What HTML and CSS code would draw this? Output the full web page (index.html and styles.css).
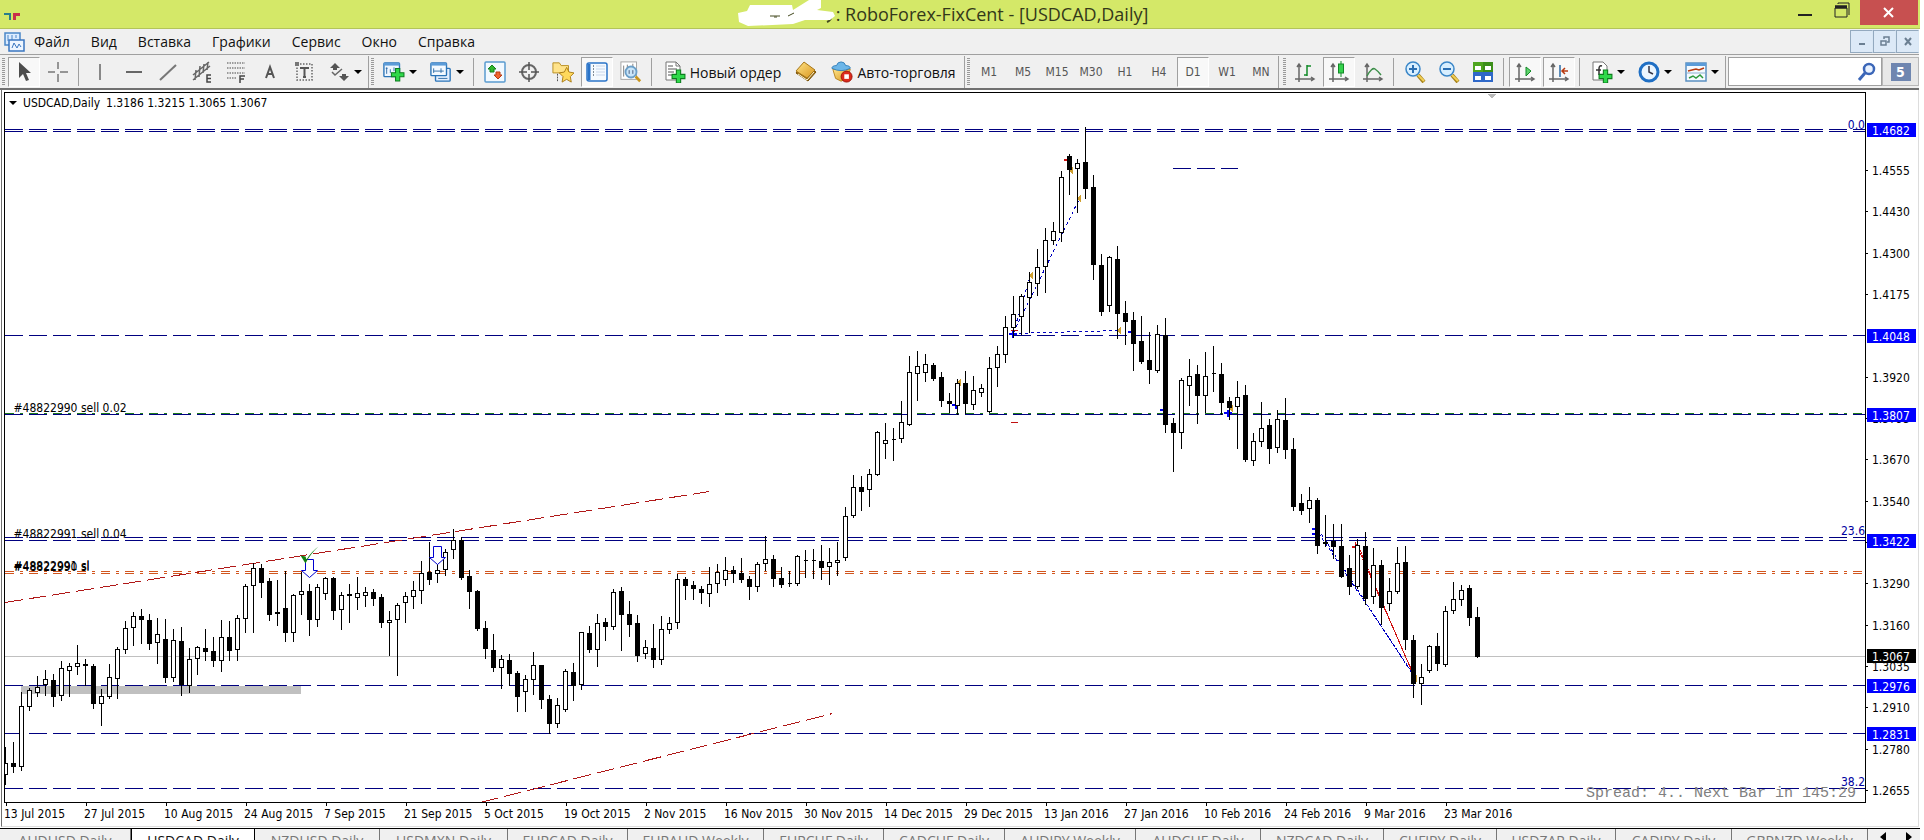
FILE: index.html
```html
<!DOCTYPE html>
<html lang="ru">
<head>
<meta charset="utf-8">
<title>RoboForex-FixCent - [USDCAD,Daily]</title>
<link rel="stylesheet" href="styles.css">
</head>
<body>
<svg class="sprite" aria-hidden="true">
  <defs>
    <linearGradient id="gold" x1="0" y1="0" x2="1" y2="1"><stop offset="0" stop-color="#ffe58a"/><stop offset="1" stop-color="#d9951c"/></linearGradient>
    <symbol id="plus" viewBox="0 0 14 14"><path d="M5 1h4v4h4v4H9v4H5V9H1V5h4z" fill="#2fd84a" stroke="#0c7d1e"/></symbol>
    <symbol id="cursor" viewBox="0 0 22 22"><path d="M6 1v16l4-4 3 7 3-1-3-7h5z" fill="#4d4d4d"/></symbol>
    <symbol id="cross" viewBox="0 0 22 22"><path d="M11 1v7M11 13v8M1 11h7M13 11h8" stroke="#777" stroke-width="1.500" fill="none"/></symbol>
    <symbol id="vline" viewBox="0 0 22 22"><path d="M11 3v16" stroke="#666" stroke-width="1.500"/></symbol>
    <symbol id="hline" viewBox="0 0 22 22"><path d="M3 11h16" stroke="#666" stroke-width="2"/></symbol>
    <symbol id="trend" viewBox="0 0 22 22"><path d="M3 19L19 4" stroke="#777" stroke-width="2"/></symbol>
    <symbol id="channel" viewBox="0 0 22 22"><path d="M2 14L18 1M2 19L19 5M5 9l-1 10M9 5L8 16M13 3l-1 9M17 1l-1 8" stroke="#666" stroke-width="1.500" fill="none"/><path d="M20 14h-4v7h4M16 17.500h4" stroke="#444" stroke-width="1.500" fill="none"/></symbol>
    <symbol id="fibo" viewBox="0 0 22 22"><path d="M2 2h18M2 7h18M2 12h18M2 17h10" stroke="#808080" stroke-width="1.500" stroke-dasharray="1.500 1"/><path d="M20 15h-5v7M15 18h4" stroke="#444" stroke-width="1.500" fill="none"/></symbol>
    <symbol id="lettera" viewBox="0 0 22 22"><path d="M7 17l4-11 4 11M8 13h6" stroke="#555" stroke-width="2" fill="none"/></symbol>
    <symbol id="textbox" viewBox="0 0 22 22"><rect x="4" y="3" width="15" height="16" fill="none" stroke="#666" stroke-width="1.500" stroke-dasharray="1.500 1.500"/><path d="M8 8V7h7v1M11.500 7v9M10 16h3" stroke="#555" stroke-width="2" fill="none"/><path d="M2 1h4v4H2z" fill="#777"/></symbol>
    <symbol id="arrows" viewBox="0 0 22 22"><path d="M7 2l5 5H9v2H5V7H2z" fill="#555"/><path d="M16 20l-5-5h3v-2h4v2h3z" fill="#555"/><path d="M4 11l3 3 7-6" stroke="#666" stroke-width="1.500" fill="none"/></symbol>
    <symbol id="newchart" viewBox="0 0 24 24"><rect x="1" y="2" width="17" height="15" rx="1" fill="#eef6ff" stroke="#2b74b8" stroke-width="1.500"/><path d="M1 2h17v3H1z" fill="#5b9bd8"/><path d="M4 7v7M3 8h2M8 9v4M12 7v4" stroke="#2b6aa5"/><use href="#plus" x="8" y="7" width="16" height="16"/></symbol>
    <symbol id="profiles" viewBox="0 0 24 24"><rect x="6" y="8" width="16" height="14" rx="1" fill="#e3efff" stroke="#2b74b8" stroke-width="1.500"/><path d="M9 19h10" stroke="#2b6aa5"/><rect x="1" y="2" width="17" height="14" rx="1" fill="#f3f9ff" stroke="#2b74b8" stroke-width="1.500"/><path d="M1 2h17v3H1z" fill="#5b9bd8"/><path d="M4 8v5M4 11h11M12 8v5" stroke="#2b6aa5"/></symbol>
    <symbol id="market" viewBox="0 0 22 22"><rect x="1" y="1" width="20" height="20" rx="1" fill="#f2f9ff" stroke="#5a9bcf" stroke-width="1.500"/><path d="M8 4l4 4h-2v3H6V8H4z" fill="#2fb82f" stroke="#14801c"/><path d="M14 18l-4-4h2v-3h4v3h2z" fill="#f0652f" stroke="#b83a10"/></symbol>
    <symbol id="target" viewBox="0 0 22 22"><circle cx="11" cy="11" r="7" fill="none" stroke="#666" stroke-width="2"/><path d="M11 1v8M11 13v8M1 11h8M13 11h8" stroke="#555" stroke-width="1.500"/></symbol>
    <symbol id="favorites" viewBox="0 0 24 24"><path d="M1 2h7l2 3h8v8H1z" fill="#ffe38a" stroke="#b58a1e"/><path d="M6 14v8" stroke="#444" stroke-dasharray="2 1"/><path d="M16 7l2.500 5 5.500 1-4 4 1 6-5-3-5 3 1-6-4-4 5.500-1z" fill="#ffd95c" stroke="#a97a12"/></symbol>
    <symbol id="navigator" viewBox="0 0 22 22"><rect x="1" y="2" width="20" height="18" rx="2" fill="#f5faff" stroke="#2b74c8" stroke-width="1.500"/><path d="M3 3v16" stroke="#2b74c8" stroke-width="3"/><path d="M7 5h1M7 8h1M7 11h1M7 14h1" stroke="#123"/><path d="M10 5h9M10 8h9M10 11h9M10 14h9" stroke="#c9d6ea"/></symbol>
    <symbol id="tester" viewBox="0 0 24 24"><rect x="1" y="1" width="17" height="19" fill="#fff" stroke="#a0a0a0"/><path d="M4 5v12M8 4v6M14 3v4" stroke="#777"/><circle cx="12" cy="12" r="6" fill="#bfe0f8" fill-opacity=".85" stroke="#6b9fc8" stroke-width="2"/><path d="M10 10v4M14 10v4" stroke="#457"/><path d="M17 17l5 5" stroke="#c9951c" stroke-width="3"/></symbol>
    <symbol id="order" viewBox="0 0 22 22"><path d="M2 1h10l4 4v14H2z" fill="#fff" stroke="#777"/><path d="M12 1v4h4" fill="none" stroke="#777"/><path d="M4 5h5M4 8h9M4 11h6M4 14h4" stroke="#555"/><use href="#plus" x="7" y="8" width="15" height="15"/></symbol>
    <symbol id="book" viewBox="0 0 22 22"><path d="M9 2l12 9-8 9L1 12z" fill="#9a6a10" stroke="#7a5208"/><path d="M9 1l11 8-8 8L1 10z" fill="url(#gold)" stroke="#a8781a"/><path d="M3 13l9 6 7-8" stroke="#fff5cf" fill="none"/></symbol>
    <symbol id="auto" viewBox="0 0 24 24"><path d="M2 9h19l-3 10-7 3-6-3z" fill="url(#gold)" stroke="#b8821a"/><path d="M1 8q0-3 5-3 1-4 5-4t5 4q5 0 5 3-10 5-20 0z" fill="#6cb6e8" stroke="#2f7db8"/><circle cx="17" cy="17" r="6" fill="#dc2b1c" stroke="#9d1208"/><rect x="14.500" y="14.500" width="5" height="5" fill="#fff"/></symbol>
    <symbol id="axes" viewBox="0 0 22 22"><path d="M5 21V3M1 18h19M3 6l2-3 2 3M17 16l3 2-3 2" stroke="#666" stroke-width="1.500" fill="none"/></symbol>
    <symbol id="bars" viewBox="0 0 22 22"><use href="#axes"/><path d="M13 4v11M13 5h4M10 14h3" stroke="#128a28" stroke-width="1.500"/></symbol>
    <symbol id="candles" viewBox="0 0 22 22"><use href="#axes"/><path d="M13 0v16" stroke="#128a28"/><rect x="10.500" y="3" width="5" height="9" fill="#35d24c" stroke="#128a28"/></symbol>
    <symbol id="linechart" viewBox="0 0 22 22"><use href="#axes"/><path d="M5 15q5-9 8-7t6 6" stroke="#3d8f4a" stroke-width="1.500" fill="none"/></symbol>
    <symbol id="zoomin" viewBox="0 0 22 22"><path d="M14 14l6 7" stroke="#a8841c" stroke-width="4"/><path d="M14 14l6 6" stroke="#f2cf55" stroke-width="2"/><circle cx="9" cy="8" r="7" fill="#d8efff" stroke="#3a86c8" stroke-width="1.500"/><path d="M5 8h8M9 4v8" stroke="#2b6fb3" stroke-width="2"/></symbol>
    <symbol id="zoomout" viewBox="0 0 22 22"><path d="M14 14l6 7" stroke="#a8841c" stroke-width="4"/><path d="M14 14l6 6" stroke="#f2cf55" stroke-width="2"/><circle cx="9" cy="8" r="7" fill="#d8efff" stroke="#3a86c8" stroke-width="1.500"/><path d="M5 8h8" stroke="#2b6fb3" stroke-width="2"/></symbol>
    <symbol id="tile" viewBox="0 0 22 22"><path d="M1 1h10v10H1zM11 11h10v10H11z" fill="#4fa51f"/><path d="M11 1h10v10H11z" fill="#3c8f1a"/><path d="M1 11h10v10H1z" fill="#2f68c8"/><path d="M11 11h10v10H11z" fill="#2f68c8"/><path d="M3 5h6v4H3zM13 5h6v4h-6zM3 15h6v4H3zM13 15h6v4h-6z" fill="#fff"/></symbol>
    <symbol id="autoscroll" viewBox="0 0 22 22"><use href="#axes"/><path d="M12 6l5 4-5 5z" fill="#5fd36c" stroke="#128a28"/></symbol>
    <symbol id="shift" viewBox="0 0 22 22"><use href="#axes"/><path d="M12 4v12" stroke="#2b6aa5" stroke-width="1.500"/><path d="M14 10h6M17 7l-3 3 3 3" stroke="#b83a10" stroke-width="1.500" fill="none"/></symbol>
    <symbol id="indicators" viewBox="0 0 22 22"><path d="M2 1h10l4 4v14H2z" fill="#fff" stroke="#777"/><path d="M11 5q-3-1-3 3v6M5 9h5" stroke="#333" stroke-width="1.500" fill="none"/><use href="#plus" x="7" y="8" width="15" height="15"/></symbol>
    <symbol id="clock" viewBox="0 0 22 22"><circle cx="11" cy="11" r="9" fill="#eaf5ff" stroke="#1f6fc4" stroke-width="3"/><path d="M11 5v6l4 2" stroke="#334" stroke-width="1.500" fill="none"/></symbol>
    <symbol id="template" viewBox="0 0 22 22"><rect x="1" y="2" width="20" height="18" fill="#f5faff" stroke="#5a8fc0" stroke-width="1.500"/><path d="M1 2h20v3H1z" fill="#5b9bd8"/><path d="M3 10l4-1 4-1 3 1 5-2" stroke="#b83a10" stroke-width="1.500" fill="none"/><path d="M1 12h20" stroke="#8fb2d0"/><path d="M4 17l4-2 3 2 4-3 3 3" stroke="#2f9a3c" stroke-width="1.500" fill="none"/></symbol>
    <symbol id="search" viewBox="0 0 20 20"><circle cx="12" cy="7" r="5" fill="#e9f2ff" stroke="#3b66b8" stroke-width="2.500"/><path d="M8 11l-6 7" stroke="#3b66b8" stroke-width="3"/></symbol>
  </defs>
</svg>

<div class="window">
  <header class="titlebar">
    <svg class="app-logo" width="18" height="10" aria-hidden="true"><path d="M0 1h7v7H5V3H0z" fill="#2a7f8c"/><path d="M9 1h7v3h-4v4H9z" fill="#c8304a"/></svg>
    <h1 class="title">
      <svg class="redaction" width="98" height="28" aria-hidden="true"><path d="M90 14q6 5-1 8" fill="none" stroke="#444a20" stroke-width="2"/><path d="M0 13l9-2 3-6h42l1 5 8-5 8-5h12v8l-4 2 16 2 2 4-5 4H67l-12 4-45 2-9-4z" fill="#fff"/><path d="M32 16h10M36 17h3M50 16l6-3" stroke="#444a20"/></svg>
      <span>: RoboForex-FixCent - [USDCAD,Daily]</span>
    </h1>
    <div class="window-buttons">
      <button class="win-btn" aria-label="Свернуть"><svg width="16" height="20"><path d="M1 15h14" stroke="#222" stroke-width="2"/></svg></button>
      <button class="win-btn" aria-label="Развернуть"><svg width="16" height="20"><path d="M1 8h12v9H1zM1 6h12M4 4V3h11v12" fill="none" stroke="#222" stroke-width="1"/><path d="M1 7h12" stroke="#222" stroke-width="3"/></svg></button>
      <button class="win-btn close" aria-label="Закрыть"><svg width="12" height="12"><path d="M1 1l9 9M10 1l-9 9" stroke="#fff" stroke-width="2"/></svg></button>
    </div>
  </header>

  <nav class="menubar">
    <svg class="menu-icon" width="22" height="22" aria-hidden="true"><rect x="1" y="2" width="15" height="12" fill="#dcecff" stroke="#4a86c8" stroke-width="1.500"/><path d="M4 4v6M8 4v5M12 4v3" stroke="#4a86c8"/><rect x="5" y="9" width="15" height="11" fill="#eef6ff" stroke="#3a76c0" stroke-width="1.500"/><path d="M8 17l2-5 3 5 2-4 2 3" stroke="#3a76c0" fill="none"/></svg>
    <button class="menu">Файл</button><button class="menu">Вид</button><button class="menu">Вставка</button><button class="menu">Графики</button><button class="menu">Сервис</button><button class="menu">Окно</button><button class="menu">Справка</button>
    <div class="mdi-buttons">
      <button class="mdi" aria-label="Свернуть график"><svg width="12" height="12"><path d="M3 9h6" stroke="#6b7f92" stroke-width="2"/></svg></button>
      <button class="mdi" aria-label="Восстановить график"><svg width="12" height="12"><path d="M2 6h5v4H2zM5 4V2h5v5H8" fill="none" stroke="#6b7f92" stroke-width="1.500"/></svg></button>
      <button class="mdi" aria-label="Закрыть график"><svg width="12" height="12"><path d="M3 3l6 7M9 3l-6 7" stroke="#6b7f92" stroke-width="2"/></svg></button>
    </div>
  </nav>

  <div class="toolbar">
    <div class="group">
      <i class="grip"></i>
      <button class="tool pressed" aria-label="Курсор"><svg><use href="#cursor"/></svg></button>
      <button class="tool" aria-label="Перекрестие"><svg><use href="#cross"/></svg></button>
      <i class="sep"></i>
      <button class="tool" aria-label="Вертикальная линия"><svg><use href="#vline"/></svg></button>
      <button class="tool" aria-label="Горизонтальная линия"><svg><use href="#hline"/></svg></button>
      <button class="tool" aria-label="Трендовая линия"><svg><use href="#trend"/></svg></button>
      <button class="tool" aria-label="Канал"><svg><use href="#channel"/></svg></button>
      <button class="tool" aria-label="Фибоначчи"><svg><use href="#fibo"/></svg></button>
      <button class="tool" aria-label="Текст"><svg><use href="#lettera"/></svg></button>
      <button class="tool" aria-label="Метка"><svg><use href="#textbox"/></svg></button>
      <button class="tool drop" aria-label="Стрелки"><svg><use href="#arrows"/></svg></button>
    </div>
    <div class="group">
      <i class="grip"></i>
      <button class="tool drop" aria-label="Новый график"><svg><use href="#newchart"/></svg></button>
      <button class="tool drop" aria-label="Профили"><svg><use href="#profiles"/></svg></button>
      <i class="sep"></i>
      <button class="tool" aria-label="Обзор рынка"><svg><use href="#market"/></svg></button>
      <button class="tool" aria-label="Окно данных"><svg><use href="#target"/></svg></button>
      <button class="tool" aria-label="Избранное"><svg><use href="#favorites"/></svg></button>
      <button class="tool pressed" aria-label="Навигатор"><svg><use href="#navigator"/></svg></button>
      <button class="tool" aria-label="Тестер стратегий"><svg><use href="#tester"/></svg></button>
      <i class="sep"></i>
      <button class="tool wide order"><svg><use href="#order"/></svg>Новый ордер</button>
      <button class="tool" aria-label="Редактор"><svg><use href="#book"/></svg></button>
      <button class="tool wide auto"><svg><use href="#auto"/></svg>Авто-торговля</button>
    </div>
    <div class="group">
      <i class="grip"></i>
      <button class="tool period">M1</button><button class="tool period">M5</button><button class="tool period">M15</button><button class="tool period">M30</button><button class="tool period">H1</button><button class="tool period">H4</button><button class="tool period pressed">D1</button><button class="tool period">W1</button><button class="tool period">MN</button>
    </div>
    <div class="group charts">
      <i class="grip"></i>
      <button class="tool" aria-label="Бары"><svg><use href="#bars"/></svg></button>
      <button class="tool pressed" aria-label="Свечи"><svg><use href="#candles"/></svg></button>
      <button class="tool" aria-label="Линия"><svg><use href="#linechart"/></svg></button>
      <i class="sep"></i>
      <button class="tool" aria-label="Увеличить"><svg><use href="#zoomin"/></svg></button>
      <button class="tool" aria-label="Уменьшить"><svg><use href="#zoomout"/></svg></button>
      <button class="tool" aria-label="Окна мозаикой"><svg><use href="#tile"/></svg></button>
      <i class="sep"></i>
      <button class="tool pressed" aria-label="Автопрокрутка"><svg><use href="#autoscroll"/></svg></button>
      <button class="tool pressed" aria-label="Сдвиг графика"><svg><use href="#shift"/></svg></button>
      <i class="sep"></i>
      <button class="tool drop" aria-label="Индикаторы"><svg><use href="#indicators"/></svg></button>
      <button class="tool drop" aria-label="Периоды"><svg><use href="#clock"/></svg></button>
      <button class="tool drop" aria-label="Шаблоны"><svg><use href="#template"/></svg></button>
    </div>
    <div class="search">
      <input type="text" aria-label="Поиск">
      <svg class="lens" width="20" height="20" aria-hidden="true"><use href="#search"/></svg>
    </div>
    <button class="chat"><span>5</span></button>
  </div>

  <main class="chart">
    <div class="plot">
      <svg class="canvas" id="plot"></svg>
      <p class="quote"><i class="caret"></i><span>USDCAD,Daily</span><span>1.3186 1.3215 1.3065 1.3067</span></p>
      <p class="spread">Spread: 4.. Next Bar in 145:29</p>
    </div>
    <svg class="prices" id="prices"></svg>
    <div class="dates" id="dates"></div>
  </main>

  <nav class="tabs">
    <button>AUDUSD,Daily</button><button class="active">USDCAD,Daily</button><button>NZDUSD,Daily</button><button>USDMXN,Daily</button><button>EURCAD,Daily</button><button>EURAUD,Weekly</button><button>EURCHF,Daily</button><button>CADCHF,Daily</button><button>AUDJPY,Weekly</button><button>AUDCHF,Daily</button><button>NZDCAD,Daily</button><button>CHFJPY,Daily</button><button>USDZAR,Daily</button><button>CADJPY,Daily</button><button>GBPNZD,Weekly</button>
    <div class="tab-arrows"><svg width="36" height="16" aria-hidden="true"><path d="M8 3v10L2 8zM28 3v10l6-5z" fill="#000"/></svg></div>
  </nav>
</div>
<script src="chart.js"></script>
</body>
</html>
```
FILE: styles.css
```css
* { box-sizing: border-box; }
body {
  margin: 0;
  height: 100vh;
  overflow: hidden;
  background: #fff;
  font-family: "Open Sans", "Noto Sans", sans-serif;
  color: #111;
}
button { margin: 0; padding: 0; border: 0; background: none; font: inherit; color: inherit; white-space: nowrap; }
p, h1 { margin: 0; font-weight: 400; }
.sprite { position: absolute; width: 0; height: 0; }
.window { display: flex; flex-direction: column; height: 100vh; }

.titlebar {
  display: flex;
  flex: 0 0 29px;
  min-height: 0;
  margin-right: 4px;
  padding-left: 4px;
  background: #d4e868;
  border-bottom: 1px solid #b3c45a;
}
.app-logo { margin-top: 12px; }
.title {
  display: flex;
  flex: 1;
  justify-content: center;
  padding-left: 78px;
  font-size: 18px;
  line-height: 28px;
  color: #33381a;
  white-space: nowrap;
}
.title span { padding-top: 1px; line-height: 27px; }
.redaction { flex: none; }
.window-buttons { display: flex; align-items: flex-start; }
.win-btn { width: 37px; height: 25px; }
.win-btn.close { width: 58px; margin-right: 2px; background: #c75050; }

.menubar {
  display: flex;
  align-items: center;
  flex: 0 0 26px;
  min-height: 0;
  margin-right: 5px;
  padding-left: 4px;
  background: #f0f0f0;
  border-bottom: 1px solid #a0a0a0;
  font-size: 14px;
}
.menu-icon { margin-right: 8px; }
.menu { margin-right: 21px; }
.mdi-buttons { display: flex; margin-left: auto; }
.mdi { width: 23px; height: 23px; border: 1px solid #93a9bf; border-right-color: #d8e6f4; background: #dce9f7; }

.toolbar {
  display: flex;
  align-items: stretch;
  flex: 0 0 35px;
  min-height: 0;
  margin-right: 5px;
  padding-top: 1px;
  background: #f0f0f0;
  border-bottom: 2px solid #707070;
}
.group { display: flex; flex: none; align-items: center; padding-left: 2px; border-right: 1px solid #a0a0a0; }
.group.charts { padding-left: 4px; }
.grip { width: 3px; height: 28px; margin-right: 2px; background: repeating-linear-gradient(#999 0 1px, #f0f0f0 1px 2px); }
.sep { width: 1px; height: 28px; margin: 0 4px 0 3px; background: #a0a0a0; }
.tool { display: flex; align-items: center; justify-content: center; width: 34px; height: 30px; }
.tool svg { flex: none; width: 22px; height: 22px; }
.tool.pressed {
  width: 32px;
  margin: 0 1px;
  border: 1px solid #a0a0a0;
  border-right-color: #fff;
  border-bottom-color: #fff;
  background: #f8f8f8;
}
.tool.drop { width: 47px; gap: 4px; }
.tool.drop::after, .caret { content: ""; border: 4px solid transparent; border-top: 4px solid #000; border-bottom: 0; }
.tool.wide { gap: 4px; font-size: 14px; }
.tool.order { width: 133px; }
.tool.auto { width: 141px; }
.tool.period { font: 12px "DejaVu Sans Condensed", sans-serif; color: #555; }
.search {
  display: flex;
  flex: 1;
  align-items: center;
  min-width: 0;
  margin: 1px 0 2px 2px;
  padding-right: 4px;
  border: 1px solid #a0a0a0;
  background: #fff;
}
.search input { flex: 1; width: 0; min-width: 0; height: 26px; padding: 0 4px; border: 0; outline: 0; }
.lens { flex: none; }
.chat { flex: none; width: 37px; margin: 1px 0 2px; border: 1px solid #b8b8b8; background: #e8e8e8; }
.chat span {
  display: block;
  width: 20px;
  margin: 0 auto;
  background: #6f86b0;
  color: #fff;
  font: bold 14px/18px "DejaVu Sans Condensed", sans-serif;
}

.chart {
  display: grid;
  flex: 1;
  grid-template: minmax(0, 1fr) 23px / minmax(0, 1fr) 52px;
  margin: 0 5px 0 1px;
  padding: 2px 0 0 2px;
  border-left: 1px solid #707070;
  border-right: 1px solid #ddd;
  border-bottom: 1px solid #ddd;
  font: 12px "DejaVu Sans Condensed", sans-serif;
  color: #000;
}
.plot { position: relative; border: 1px solid #000; }
.canvas, .prices { display: block; width: 100%; height: 100%; overflow: hidden; }
.quote { position: absolute; top: 3px; left: 4px; display: flex; align-items: center; line-height: 14px; }
.quote span { margin-left: 6px; }
.spread { position: absolute; right: 9px; bottom: 0; color: #808080; font: 15px "Liberation Mono", monospace; }
.dates { display: flex; grid-column: 1 / -1; }
.dates span { flex: 0 0 80px; padding-top: 4px; line-height: 14px; white-space: nowrap; background: linear-gradient(#000, #000) 2px 0 / 1px 3px no-repeat; }

.tabs {
  display: grid;
  flex: 0 0 12px;
  grid-template-columns: 131fr 124fr 125fr 128fr 120fr 136fr 120fr 121fr 131fr 125fr 123fr 113fr 119fr 116fr 136fr 52fr;
  margin-top: 1px;
  margin-right: 4px;
  overflow: hidden;
  background: #f0f0f0;
  border-top: 1px solid #000;
  color: #777;
  font-size: 14px;
  line-height: 22px;
}
.tabs button { height: 24px; border-right: 1px solid #777; }
.tabs .active { background: #fff; color: #111; border-left: 1px solid #000; border-right: 1px solid #000; }
.tab-arrows { padding-left: 10px; }

.level { stroke: #000080; stroke-dasharray: 18 6; }
.order-level { stroke: #1c7a1c; stroke-dasharray: 9 6 3 6; }
.stop-level { stroke: #d2561e; stroke-dasharray: 9 6 3 6; }
.bid { stroke: #c0c0c0; }
.trendline { stroke: #b01818; stroke-dasharray: 18 6; }
.trade { stroke: #0000c0; stroke-dasharray: 3 3; }
.loss { stroke: #d01010; stroke-dasharray: 8 1; }
.red { stroke: #c01010; }
.bear { fill: #000; stroke: #000; }
.bull { fill: #fff; stroke: #000; }
.entry { fill: #0000f0; }
.entry-red { fill: #d01010; }
.exit { fill: #d0a030; }
.down { fill: #fff; stroke: #0000d0; stroke-width: 1; }
.check { fill: #118011; }
.fib { fill: #0000a0; }
```
FILE: chart.js
```js
const NS = "http://www.w3.org/2000/svg";
const add = (parent, tag, attrs, text) => {
  const el = document.createElementNS(NS, tag);
  for (const k in attrs) el.setAttribute(k, attrs[k]);
  if (text) el.textContent = text;
  parent.appendChild(el);
  return el;
};

// high, body top, body bottom, low, 1 = bearish
const candles = `747 763 775 784 0|742 763 767 772 1|692 706 767 770 0|688 690 707 710 0|676 687 693 696 0|670 679 685 695 0|674 680 697 706 1|661 668 696 700 0|663 666 671 696 0|645 663 667 674 0
659 664 666 685 1|664 666 704 708 1|689 696 704 725 0|664 677 697 698 0|647 649 679 698 0|621 628 650 653 0|612 616 628 645 0|609 616 620 643 1|614 620 644 649 1|618 634 643 663 0
619 639 678 682 1|629 640 678 681 0|627 641 685 695 1|648 659 686 692 0|646 647 659 674 0|629 648 652 660 1|637 651 661 666 1|620 637 661 671 0|621 637 651 660 1|615 618 650 660 0
584 586 619 632 0|563 568 586 632 0|564 568 583 597 1|578 581 615 620 1|580 612 614 625 1|571 608 633 641 1|594 595 633 641 0|572 591 595 614 0|584 591 620 635 1|584 587 620 626 0
577 578 594 599 0|577 578 611 619 1|592 595 610 629 0|584 594 596 622 1|577 593 598 609 0|587 592 596 606 0|589 592 599 605 1|594 597 623 627 1|611 620 623 655 0|603 605 620 675 0
592 596 603 622 0|581 590 597 608 0|561 573 591 603 0|542 572 580 584 1|562 570 574 582 0|549 552 570 575 0|529 540 550 558 0|537 540 578 579 1|570 576 592 608 1|590 591 629 630 1
621 628 649 658 1|634 650 668 671 1|655 659 668 688 0|654 660 674 685 1|671 673 697 711 1|675 679 692 711 0|652 665 680 694 0|665 665 700 708 1|695 699 724 733 1|698 705 724 727 0
669 671 710 711 0|663 672 686 700 1|632 632 685 689 0|626 633 650 652 1|614 623 650 666 0|618 622 627 640 1|589 592 627 629 0|587 591 615 650 1|601 614 625 636 1|615 623 656 661 1
640 647 654 658 0|624 648 660 667 1|616 629 660 664 0|617 623 630 633 0|574 579 623 628 0|577 579 586 599 1|581 585 589 599 1|586 589 593 603 1|567 584 594 606 0|564 572 584 592 0
557 570 580 585 0|566 570 574 582 1|558 573 580 582 1|576 579 587 599 1|562 564 587 591 0|536 559 564 570 0|555 559 579 586 1|567 578 585 587 1|571 583 584 586 1|555 556 584 585 0
550 560 561 577 1|549 560 561 578 1|545 561 568 579 1|548 562 567 584 0|542 560 563 575 0|507 516 558 560 0|475 487 516 517 0|476 487 492 510 1|469 474 490 506 0|431 432 475 475 0
423 440 444 458 0|428 439 440 460 1|401 422 439 442 0|356 372 425 425 0|351 366 374 400 0|354 364 373 381 0|363 365 379 380 1|372 377 401 406 1|393 401 404 412 1|379 383 406 414 0
371 383 404 413 1|376 390 405 409 0|384 388 393 396 0|357 368 412 412 0|346 354 368 386 0|316 327 355 362 0|296 314 328 337 0|294 296 317 334 0|272 282 298 332 0|249 267 284 295 0
228 240 267 292 0|222 231 241 244 0|171 177 233 241 0|154 156 170 194 1|159 163 169 212 0|127 162 189 198 1|175 187 265 279 1|254 265 312 315 1|256 257 306 311 0|246 259 314 338 1
301 313 322 344 1|312 320 344 370 1|316 341 362 363 1|332 360 370 383 1|325 334 371 372 0|318 335 425 432 1|418 423 433 471 1|378 380 433 448 0|359 376 386 405 0|365 374 396 423 1
352 376 396 412 0|346 373 374 391 1|363 374 403 414 1|397 401 408 419 1|381 397 407 448 0|385 395 460 461 1|433 441 461 465 0|402 428 442 446 0|419 425 449 463 1|410 419 448 452 0
398 420 450 458 1|438 449 507 510 1|494 503 511 514 1|487 500 509 522 0|498 500 546 553 1|515 542 544 546 1|524 541 547 558 1|524 546 577 577 1|555 568 587 594 1|539 545 587 588 0
532 546 599 604 1|548 565 597 603 0|560 565 608 624 1|578 591 604 610 0|547 563 592 593 0|546 562 640 649 1|635 640 684 697 1|664 677 684 704 0|645 646 671 672 0|633 646 664 670 1
606 611 665 666 0|582 599 611 613 0|585 590 600 605 0|585 588 618 625 1|607 617 657 657 1`
  .split(/[|\n]/).map(s => s.trim().split(" ").map(Number));

// Window coordinates; the half pixel centres strokes on the pixel grid.
const plot = add(document.getElementById("plot"), "g", { transform: "translate(-4.5 -92.5)", "shape-rendering": "crispEdges" });
const line = (cls, x1, y1, x2, y2) => add(plot, "line", { class: cls, x1, y1, x2, y2 });
const FAR = 6000;

add(plot, "rect", { x: 20.5, y: 685.5, width: 280, height: 8, fill: "#c0c0c0" });
line("bid", 4.5, 656, FAR, 656);
for (const y of [129, 131, 335, 414, 537, 540, 685, 733, 788]) line("level", 4.5, y, FAR, y);
line("order-level", 4.5, 413, FAR, 413);
for (const y of [571, 573]) line("stop-level", 4.5, y, FAR, y);
line("level", 1172.5, 168, 1237, 168);
line("trendline", 4.5, 602, 709, 491);
line("trendline", 480, 802, 832, 713);
add(plot, "path", { d: "M1487 93h9l-4.500 5z", fill: "#b8b8b8" });

line("trade", 1013, 332, 1079, 198);
line("trade", 1013, 332, 1030, 274);
line("trade", 1013, 333, 1117, 330);
line("trade", 1315, 528, 1413, 674);
line("trade", 1321, 534, 1413, 675);
line("loss", 1355, 542, 1413, 674);
line("loss", 1358, 546, 1413, 675);
line("red", 1010, 330, 1017, 330);
line("red", 1010, 422, 1017, 422);
const entry = (cls, x, y) => add(plot, "path", { class: cls, d: `M${x - 4} ${y - 1}h3v-2h2v2h3v2h-3v3h-2v-3h-3z` });
for (const [x, y] of [[1012, 333], [955, 404], [1131, 331], [1163, 409], [1227, 412], [1315, 528], [1315, 533]]) entry("entry", x, y);
entry("entry-red", 1067, 159);
entry("entry-red", 1355, 546);
for (const [x, y] of [[1031, 275], [1071, 170], [1079, 198], [1119, 330], [959, 382], [1231, 408], [1415, 678]])
  add(plot, "path", { class: "exit", d: `M${x - 3} ${y}l4 -4v8z` });

candles.forEach(([high, top, bottom, low, bear], i) => {
  const x = 5 + 8 * i;
  line("bear", x, high - 0.5, x, low + 0.5);
  add(plot, "path", { class: bear ? "bear" : "bull", d: `M${x - 2} ${top}H${x + 2}V${bottom - 1}H${x - 2}Z` });
});

for (const [x, y] of [[309, 559], [437, 546]])
  add(plot, "path", { class: "down", "shape-rendering": "auto", d: `M${x - 4} ${y}h8v11h4l-8 7-8-7h4z` });
add(plot, "path", { class: "check", "shape-rendering": "auto", d: "M300 555l5 1 1 3q5-8 12-13-8 7-13 17z" });

const label = (x, y, text) => add(plot, "text", { x, y }, text);
label(13, 411, "#48822990 sell 0.02");
label(13, 537, "#48822991 sell 0.04");
label(13, 569, "#48822991 sl");
label(13, 570, "#48822990 sl");

const canvas = document.getElementById("plot");
for (const [y, text] of [[36, "0.0"], [442, "23.6"], [693, "38.2"]])
  add(canvas, "text", { class: "fib", x: "100%", y, "text-anchor": "end" }, text);

const axis = add(document.getElementById("prices"), "g", { transform: "translate(0 -92)" });
const ticks = [[170, "1.4555"], [211, "1.4430"], [253, "1.4300"], [294, "1.4175"], [377, "1.3920"], [418, "1.3795"], [459, "1.3670"], [501, "1.3540"], [542, "1.3415"], [583, "1.3290"], [625, "1.3160"], [666, "1.3035"], [707, "1.2910"], [749, "1.2780"], [790, "1.2655"]];
const marks = [[123, "1.4682"], [329, "1.4048"], [408, "1.3807"], [534, "1.3422"], [649, "1.3067"], [679, "1.2976"], [727, "1.2831"]];
for (const [y, text] of ticks) {
  add(axis, "rect", { x: 0, y, width: 2, height: 1 });
  if (text !== "1.3415") add(axis, "text", { x: 6, y: y + 5 }, text);
}
for (const [y, text] of marks) {
  add(axis, "rect", { x: 1, y, width: 49, height: 14, fill: text === "1.3067" ? "#000" : "#0000ff" });
  add(axis, "text", { x: 6, y: y + 12, fill: "#fff" }, text);
}

const dates = document.getElementById("dates");
for (const d of ["13 Jul 2015", "27 Jul 2015", "10 Aug 2015", "24 Aug 2015", "7 Sep 2015", "21 Sep 2015", "5 Oct 2015", "19 Oct 2015", "2 Nov 2015", "16 Nov 2015", "30 Nov 2015", "14 Dec 2015", "29 Dec 2015", "13 Jan 2016", "27 Jan 2016", "10 Feb 2016", "24 Feb 2016", "9 Mar 2016", "23 Mar 2016"]) {
  const span = document.createElement("span");
  span.textContent = d;
  dates.appendChild(span);
}
```
